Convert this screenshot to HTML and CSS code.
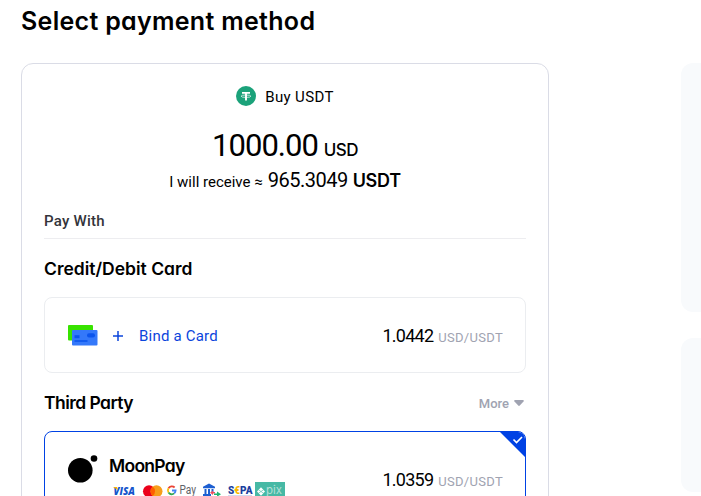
FILE: index.html
```
<!DOCTYPE html>
<html lang="en">
<head>
    <meta charset="UTF-8">
    <meta name="viewport" content="width=device-width, initial-scale=1.0">
    <title>Select payment method</title>
    <link rel="stylesheet" href="styles.css">
</head>
<body>
    <div class="page">
        <main class="main">
            <h1 class="page-title">Select payment method</h1>
            <section class="card">
                <div class="coin">
                    <svg class="coin-icon" width="20" height="20" viewBox="0 0 20 20">
                        <circle cx="10" cy="10" r="10" fill="#1ba27a"/>
                        <path d="M6 6.9h8M10 7v7.5" fill="none" stroke="#fff" stroke-width="1.9"/>
                        <ellipse cx="10" cy="10.2" rx="4.9" ry="1.2" fill="none" stroke="#fff" stroke-width=".7"/>
                    </svg>
                    <span class="coin-name">Buy USDT</span>
                </div>
                <div class="amount">
                    <span class="amount-value">1000.00</span>
                    <span class="amount-unit">USD</span>
                </div>
                <div class="receive">
                    <span class="receive-label">I will receive ≈</span>
                    <span class="receive-value">965.3049</span>
                    <span class="receive-unit">USDT</span>
                </div>
                <div class="pay-with"><span>Pay With</span></div>

                <div class="section-head">
                    <h2 class="heading heading-credit">Credit/Debit Card</h2>
                </div>
                <div class="method">
                    <svg class="card-icon" width="30" height="22" viewBox="0 0 30 22">
                        <rect width="25" height="15.5" rx="1" fill="#38e300"/>
                        <rect x="4" y="5" width="25.5" height="15.5" rx="1" fill="#3478fa"/>
                        <rect x="19" y="8.2" width="8" height="4.2" rx="2" fill="#0b54ed"/>
                        <path d="M6.5 11.7h5" stroke="#0b54ed" stroke-width="3"/>
                        <path d="M6.5 16h13" stroke="#0b54ed" stroke-width="1.6"/>
                    </svg>
                    <svg class="plus" width="10" height="10" viewBox="0 0 10 10">
                        <path d="M5 0v10M0 5h10" stroke="#0b45dc" stroke-width="1.5"/>
                    </svg>
                    <span class="bind">Bind a Card</span>
                    <div class="rate">
                        <span class="rate-value">1.0442</span>
                        <span class="rate-unit">USD/USDT</span>
                    </div>
                </div>

                <div class="section-head">
                    <h2 class="heading heading-third">Third Party</h2>
                    <div class="more">
                        <span>More</span>
                        <svg width="10" height="6" viewBox="0 0 10 6">
                            <path d="M1 0h8q1 .2 .8 1.3L5.8 5.5q-.8.8-1.6 0L.2 1.3Q0 .2 1 0z" fill="#a0a3b1"/>
                        </svg>
                    </div>
                </div>
                <div class="method method-active">
                    <svg class="corner" width="27" height="27" viewBox="0 0 27 27">
                        <path d="M0 0h27v27z" fill="#0042e4"/>
                        <path d="M14.5 8.5l3 3 5.5-5.5" fill="none" stroke="#fff" stroke-width="1.6"/>
                    </svg>
                    <svg class="moon-icon" width="30" height="28" viewBox="0 0 30 28">
                        <circle cx="12.3" cy="15.2" r="12.3"/>
                        <circle cx="26" cy="3.5" r="3.3"/>
                    </svg>
                    <div class="provider">
                        <h3 class="provider-name">MoonPay</h3>
                        <div class="brands">
                            <svg width="174" height="15" viewBox="0 0 174 15">
                                <!-- Visa -->
                                <text class="visa" x="4.5" y="13" textLength="21.5" lengthAdjust="spacingAndGlyphs">VISA</text>
                                <path d="M4 5h4l1 3z" fill="#f7b600"/>
                                <!-- Mastercard -->
                                <circle cx="40" cy="9.3" r="6" fill="#eb001b"/>
                                <circle cx="47.5" cy="9.3" r="6" fill="#f79e1b"/>
                                <path d="M43.75 4.6a6 6 0 0 1 0 9.4a6 6 0 0 1 0-9.4z" fill="#ff5f00"/>
                                <!-- Google Pay -->
                                <g fill="none" stroke-width="1.8">
                                    <path d="M65.6 5.5A3.9 3.9 0 0 0 59.5 6.3" stroke="#ea4335"/>
                                    <path d="M59.5 6.3a3.9 3.9 0 0 0 0 4.3" stroke="#fbbc04"/>
                                    <path d="M59.5 10.6a3.9 3.9 0 0 0 5.7.8" stroke="#34a853"/>
                                    <path d="M65.2 11.4a3.9 3.9 0 0 0 1.4-2.9H63" stroke="#4285f4"/>
                                </g>
                                <text class="gpay" x="70.5" y="12.2" textLength="16.5" lengthAdjust="spacingAndGlyphs">Pay</text>
                                <!-- Bank transfer -->
                                <path d="M94 6.2v-1.5L100 1.5l6 3.2v1.5zM95.5 7h2v5h-2zM99 7h2v5h-2zM102.5 7h2v3h-2zM94 12h8v2h-8z" fill="#1d5fd1"/>
                                <path d="M104 8.5l-3 2.2 3 2.3z" fill="#f04f5f"/>
                                <path d="M104 10.8h2" stroke="#f04f5f" stroke-width="1.5"/>
                                <path d="M105 12.2h4" stroke="#20b573" stroke-width="1.6"/>
                                <path d="M108 9.4l4 2.8-4 2.6z" fill="#20b573"/>
                                <!-- SEPA -->
                                <text class="sepa" x="119" y="12.2" textLength="24.5" lengthAdjust="spacingAndGlyphs">S<tspan fill="#f8b800">€</tspan>PA</text>
                                <path d="M119 14h24" stroke="#8aa0d8" stroke-width=".8"/>
                                <!-- Pix -->
                                <rect x="146" y="0" width="30" height="15" fill="#47b9a5"/>
                                <path d="M148 9.5l4-4.2 4 4.2-4 4.2z" fill="#fff"/>
                                <path d="M149.5 7.8l2.5 1.7 2.5-1.7M149.5 11.2l2.5-1.7 2.5 1.7" fill="none" stroke="#47b9a5" stroke-width=".6"/>
                                <text class="pix" x="157" y="12.2" textLength="16" lengthAdjust="spacingAndGlyphs">pix</text>
                            </svg>
                        </div>
                    </div>
                    <div class="rate">
                        <span class="rate-value">1.0359</span>
                        <span class="rate-unit">USD/USDT</span>
                    </div>
                </div>
            </section>
        </main>
        <aside class="side">
            <div class="side-box side-box-top"></div>
            <div class="side-box side-box-bottom"></div>
        </aside>
    </div>
</body>
</html>
```
FILE: styles.css
```
* {
    box-sizing: border-box;
}
body {
    margin: 0;
    background: #fff;
    color: #000;
    font-family: Roboto, "Liberation Sans", sans-serif;
    overflow: hidden;
}
.page {
    display: flex;
    height: 496px;
    padding-left: 21px;
    overflow: hidden;
}
.main {
    width: 528px;
    flex: none;
}
.page-title,
.heading,
.provider-name {
    margin: 0;
    font-family: Inter, "Liberation Sans", sans-serif;
    font-weight: 600;
    font-feature-settings: "cv11";
    white-space: nowrap;
}
.page-title {
    height: 63px;
    padding-top: 6px;
    font-size: 25px;
    line-height: 30px;
    letter-spacing: 0.3px;
}
.card {
    height: 520px;
    padding: 0 22px;
    border: 1px solid #dadce6;
    border-radius: 12px;
}
.coin {
    display: flex;
    align-items: center;
    justify-content: center;
    gap: 9px;
    height: 64px;
    font-size: 15px;
    letter-spacing: 0.35px;
}
.coin-name {
    padding-top: 2px;
}
.amount {
    display: flex;
    align-items: baseline;
    justify-content: center;
    gap: 6px;
    height: 38px;
    line-height: 36px;
}
.amount-value {
    font-size: 31px;
    letter-spacing: -1px;
}
.amount-unit {
    font-family: Inter, "Liberation Sans", sans-serif;
    font-size: 17px;
    font-weight: 500;
    letter-spacing: -0.6px;
}
.receive {
    display: flex;
    align-items: baseline;
    justify-content: center;
    gap: 5px;
    height: 30px;
    line-height: 28px;
}
.receive-label {
    font-size: 15px;
}
.receive-value {
    font-size: 20px;
    letter-spacing: -0.5px;
}
.receive-unit {
    font-family: Inter, "Liberation Sans", sans-serif;
    font-size: 18px;
    font-weight: 600;
    letter-spacing: -0.3px;
}
.pay-with {
    height: 43px;
    padding-top: 15px;
    border-bottom: 1px solid #ededf0;
    color: #33343a;
    font-size: 15px;
    font-weight: 500;
    line-height: 20px;
    letter-spacing: 0.25px;
}
.section-head {
    display: flex;
    align-items: center;
    justify-content: space-between;
    height: 58px;
}
.heading {
    padding-top: 1px;
    font-size: 17.5px;
}
.heading-third {
    letter-spacing: -0.55px;
}
.more {
    display: flex;
    align-items: center;
    gap: 5px;
    padding: 2px 2px 0 0;
    color: #a0a3b1;
    font-size: 13px;
    font-weight: 500;
}
.method {
    display: flex;
    align-items: center;
    height: 76px;
    padding: 0 22px 0 23px;
    border: 1px solid #ebedf0;
    border-radius: 8px;
}
.card-icon {
    flex: none;
    margin-top: 1px;
}
.plus {
    margin: 2px 16px 0 15px;
}
.bind {
    padding-top: 2px;
    color: #0b45dc;
    font-size: 15px;
    letter-spacing: 0.2px;
}
.rate {
    display: flex;
    align-items: baseline;
    gap: 5px;
    margin-left: auto;
}
.rate-value {
    font-size: 18px;
    letter-spacing: -0.75px;
}
.rate-unit {
    color: #a0a3b1;
    font-size: 13px;
    letter-spacing: 0.3px;
}
.method-active {
    position: relative;
    align-items: flex-start;
    height: 100px;
    border-color: #0042e4;
    overflow: hidden;
}
.method-active .rate {
    padding-top: 37px;
}
.corner {
    position: absolute;
    top: -1px;
    right: -1px;
}
.moon-icon {
    margin-top: 23px;
}
.provider {
    padding: 22px 0 0 11px;
}
.provider-name {
    font-size: 17.5px;
    line-height: 24px;
    letter-spacing: -0.7px;
}
.brands {
    margin-top: 4px;
}
.brands svg {
    display: block;
    overflow: visible;
}
.visa {
    fill: #1455cc;
    font: italic 900 11px "Open Sans", sans-serif;
}
.gpay {
    fill: #5f6368;
    font: 12px Roboto, sans-serif;
}
.sepa {
    fill: #1c3fa0;
    font: 900 11px Roboto, sans-serif;
}
.pix {
    fill: #b4e0d8;
    font: 11px Inter, sans-serif;
}
.side {
    flex: 1;
    margin-left: 132px;
    padding-top: 63px;
    overflow: hidden;
}
.side-box {
    width: 100px;
    background: #f8fafc;
    border-radius: 12px;
}
.side-box-top {
    height: 249px;
    margin-bottom: 26px;
}
.side-box-bottom {
    height: 154px;
}
```
